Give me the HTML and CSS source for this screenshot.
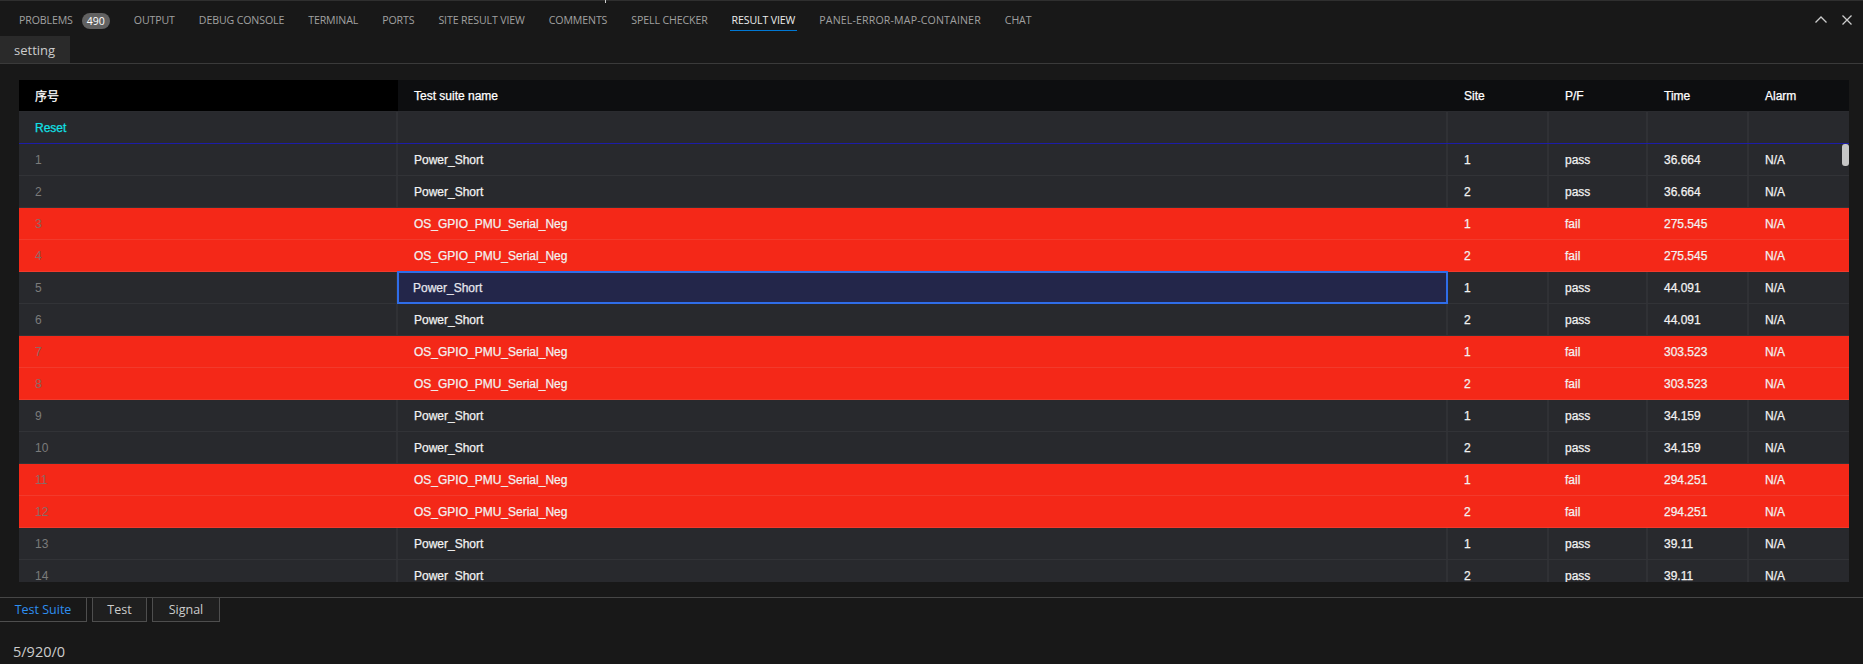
FILE: index.html
```html
<!DOCTYPE html>
<html>
<head>
<meta charset="utf-8">
<link rel="stylesheet" href="styles.css">
</head>
<body>
<div class="panel">
  <div class="tabbar">
    <div class="tabs">
      <span class="tab">PROBLEMS<span class="badge">490</span></span>
      <span class="tab">OUTPUT</span>
      <span class="tab">DEBUG CONSOLE</span>
      <span class="tab">TERMINAL</span>
      <span class="tab">PORTS</span>
      <span class="tab">SITE RESULT VIEW</span>
      <span class="tab">COMMENTS</span>
      <span class="tab">SPELL CHECKER</span>
      <span class="tab active">RESULT VIEW</span>
      <span class="tab wide">PANEL-ERROR-MAP-CONTAINER</span>
      <span class="tab">CHAT</span>
    </div>
    <div class="actions">
      <svg class="icon" viewBox="0 0 16 16"><path d="M2.5 10.5 L8 5 L13.5 10.5" fill="none" stroke="#cccccc" stroke-width="1.3"/></svg>
      <svg class="icon" viewBox="0 0 16 16"><path d="M3.5 3.5 L12.5 12.5 M12.5 3.5 L3.5 12.5" fill="none" stroke="#cccccc" stroke-width="1.3"/></svg>
    </div>
    <span class="tick"></span>
  </div>
  <div class="subbar">
    <span class="subtab">setting</span>
  </div>
  <div class="content">
    <div class="grid">
      <div class="row head">
        <div class="cell idx-h">序号</div>
        <div class="cell">Test suite name</div>
        <div class="cell">Site</div>
        <div class="cell">P/F</div>
        <div class="cell">Time</div>
        <div class="cell">Alarm</div>
      </div>
      <div class="row reset">
        <div class="cell reset-txt">Reset</div>
        <div class="cell"></div>
        <div class="cell"></div>
        <div class="cell"></div>
        <div class="cell"></div>
        <div class="cell"></div>
      </div>
      <div class="row"><div class="cell idx">1</div><div class="cell">Power_Short</div><div class="cell">1</div><div class="cell">pass</div><div class="cell">36.664</div><div class="cell">N/A</div></div>
      <div class="row"><div class="cell idx">2</div><div class="cell">Power_Short</div><div class="cell">2</div><div class="cell">pass</div><div class="cell">36.664</div><div class="cell">N/A</div></div>
      <div class="row fail"><div class="cell idx">3</div><div class="cell">OS_GPIO_PMU_Serial_Neg</div><div class="cell">1</div><div class="cell">fail</div><div class="cell">275.545</div><div class="cell">N/A</div></div>
      <div class="row fail"><div class="cell idx">4</div><div class="cell">OS_GPIO_PMU_Serial_Neg</div><div class="cell">2</div><div class="cell">fail</div><div class="cell">275.545</div><div class="cell">N/A</div></div>
      <div class="row"><div class="cell idx">5</div><div class="cell selected">Power_Short</div><div class="cell">1</div><div class="cell">pass</div><div class="cell">44.091</div><div class="cell">N/A</div></div>
      <div class="row"><div class="cell idx">6</div><div class="cell">Power_Short</div><div class="cell">2</div><div class="cell">pass</div><div class="cell">44.091</div><div class="cell">N/A</div></div>
      <div class="row fail"><div class="cell idx">7</div><div class="cell">OS_GPIO_PMU_Serial_Neg</div><div class="cell">1</div><div class="cell">fail</div><div class="cell">303.523</div><div class="cell">N/A</div></div>
      <div class="row fail"><div class="cell idx">8</div><div class="cell">OS_GPIO_PMU_Serial_Neg</div><div class="cell">2</div><div class="cell">fail</div><div class="cell">303.523</div><div class="cell">N/A</div></div>
      <div class="row"><div class="cell idx">9</div><div class="cell">Power_Short</div><div class="cell">1</div><div class="cell">pass</div><div class="cell">34.159</div><div class="cell">N/A</div></div>
      <div class="row"><div class="cell idx">10</div><div class="cell">Power_Short</div><div class="cell">2</div><div class="cell">pass</div><div class="cell">34.159</div><div class="cell">N/A</div></div>
      <div class="row fail"><div class="cell idx">11</div><div class="cell">OS_GPIO_PMU_Serial_Neg</div><div class="cell">1</div><div class="cell">fail</div><div class="cell">294.251</div><div class="cell">N/A</div></div>
      <div class="row fail"><div class="cell idx">12</div><div class="cell">OS_GPIO_PMU_Serial_Neg</div><div class="cell">2</div><div class="cell">fail</div><div class="cell">294.251</div><div class="cell">N/A</div></div>
      <div class="row"><div class="cell idx">13</div><div class="cell">Power_Short</div><div class="cell">1</div><div class="cell">pass</div><div class="cell">39.11</div><div class="cell">N/A</div></div>
      <div class="row"><div class="cell idx">14</div><div class="cell">Power_Short</div><div class="cell">2</div><div class="cell">pass</div><div class="cell">39.11</div><div class="cell">N/A</div></div>
      <span class="thumb"></span>
    </div>
  </div>
  <div class="bottombar">
    <span class="btab active">Test Suite</span>
    <span class="btab">Test</span>
    <span class="btab">Signal</span>
  </div>
  <div class="status">5/920/0</div>
</div>
</body>
</html>
```

FILE: styles.css
```css
* { box-sizing: border-box; }
html, body {
  margin: 0;
  padding: 0;
  background: #181818;
  width: 1863px;
  height: 664px;
  overflow: hidden;
}
.panel {
  font-family: "Open Sans", "Noto Sans", sans-serif;
  color: #cccccc;
  border-top: 1px solid #2f2f2f;
  position: relative;
}
.tabbar {
  display: flex;
  align-items: flex-start;
  height: 35px;
  padding-left: 17px;
}
.tabs {
  display: flex;
  gap: 20px;
}
.tab {
  display: flex;
  align-items: center;
  font-size: 10.6px;
  letter-spacing: -0.12px;
  color: #a0a0a0;
  height: 30px;
  padding: 11px 2px 1px;
  border-bottom: 1px solid transparent;
  line-height: 15px;
  white-space: nowrap;
}
.tab.wide { letter-spacing: 0.15px; }
.tab.active {
  color: #ececec;
  border-bottom-color: #0078d4;
}
.badge {
  display: inline-block;
  margin-left: 9px;
  background: #616161;
  color: #ffffff;
  font-size: 10.5px;
  line-height: 16px;
  height: 16px;
  padding: 0 5px;
  border-radius: 8px;
  letter-spacing: 0;
}
.actions {
  margin-left: auto;
  display: flex;
  gap: 10px;
  padding: 11px 8px 0 0;
}
.icon {
  width: 16px;
  height: 16px;
  display: block;
}
.tick {
  position: absolute;
  left: 605px;
  top: -1px;
  width: 1px;
  height: 3px;
  background: #d0d0d0;
}
.subbar {
  height: 28px;
  border-bottom: 1px solid #3a3a3a;
  display: flex;
}
.subtab {
  display: flex;
  align-items: center;
  width: 70px;
  padding-left: 14px;
  background: #2a2a2a;
  font-size: 13px;
  color: #cccccc;
}
.content {
  padding: 16px 14px 0 19px;
}
.grid {
  position: relative;
  height: 502px;
  overflow: hidden;
  font-family: "Liberation Sans", Arial, "Noto Sans CJK SC", sans-serif;
  font-size: 12px;
  color: #f2f2f2;
  background: #28292d;
  -webkit-text-stroke: 0.25px;
}
.row {
  display: grid;
  grid-template-columns: 379px 1050px 101px 99px 101px 100px;
  height: 32px;
  border-bottom: 1px solid #323337;
  background: #28292d;
}
.cell {
  display: flex;
  align-items: center;
  padding-left: 16px;
  border-right: 2px solid #303135;
  white-space: nowrap;
}
.cell:last-child { border-right: none; }
.row.head {
  background: #0d0e10;
  border-bottom: 1px solid #2a2b2f;
}
.row.head .cell { border-right: none; color: #ffffff; }
.row.head .idx-h { background: #000000; }
.row.reset {
  height: 32px;
  border-bottom: 1px solid #1c1ca8;
}
.reset-txt { color: #11e0e6; }
.idx { color: #7b7b7b; -webkit-text-stroke: 0; }
.row.fail {
  background: #f42818;
  border-bottom-color: #f23a2c;
}
.row.fail .cell { border-right-color: #f42818; }
.row.fail .idx { color: #8a6a66; }
.cell.selected {
  background: #23264a;
  border: 2px solid #2f6de8;
  padding-left: 14px;
  margin: -1px 0 -1px -1px;
  color: #e6e6ee;
}
.thumb {
  position: absolute;
  right: 0;
  top: 64px;
  width: 7px;
  height: 22px;
  background: #c6c6c6;
  border-radius: 3px;
}
.bottombar {
  margin-top: 15px;
  border-top: 1px solid #464646;
  display: flex;
  gap: 5px;
  height: 25px;
}
.btab {
  display: flex;
  align-items: center;
  justify-content: center;
  font-size: 12.5px;
  color: #cccccc;
  border: 1px solid #4e4e4e;
  border-top: none;
  background: #1f1f1f;
  width: 55px;
}
.btab.active {
  color: #2e8ff0;
  width: 87px;
  border-left: none;
  background: #181818;
}
.btab:last-child { width: 68px; }
.status {
  padding: 20px 0 0 13px;
  font-size: 14.5px;
  color: #cccccc;
}
```
